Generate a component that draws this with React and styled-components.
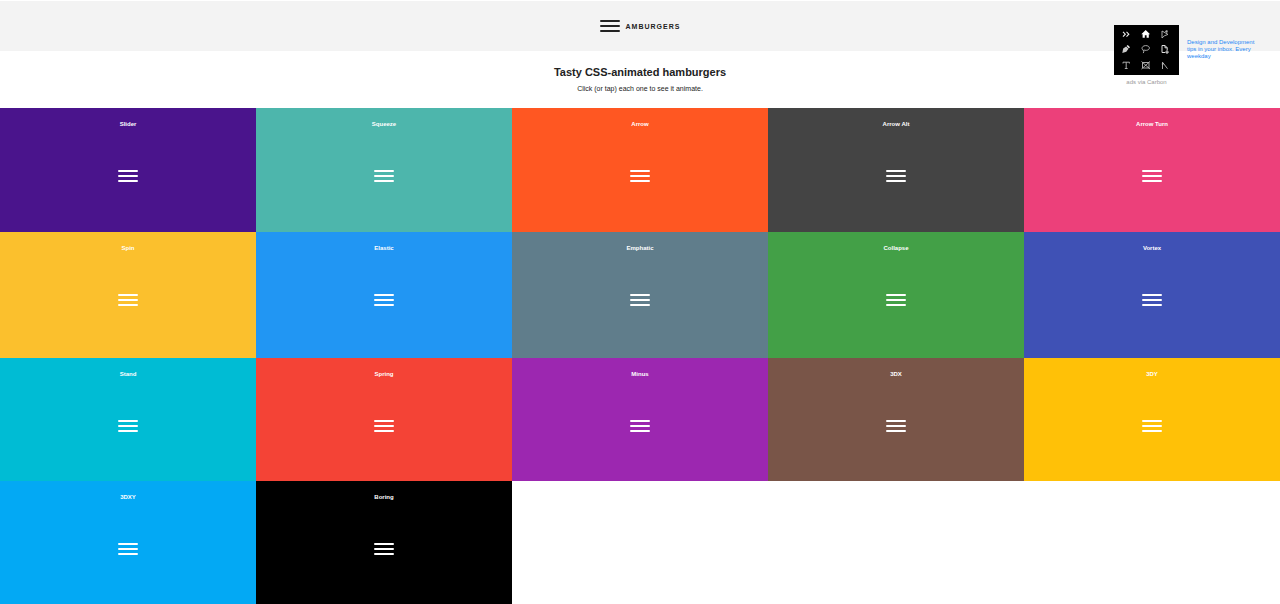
import React, { useState } from 'react'
import styled, { createGlobalStyle } from 'styled-components'

const burgers = [
    { name: 'Slider', color: '#4a148c' },
    { name: 'Squeeze', color: '#4db6ac' },
    { name: 'Arrow', color: '#ff5722' },
    { name: 'Arrow Alt', color: '#444444' },
    { name: 'Arrow Turn', color: '#ec407a' },
    { name: 'Spin', color: '#fbc02d' },
    { name: 'Elastic', color: '#2196f3' },
    { name: 'Emphatic', color: '#607d8b' },
    { name: 'Collapse', color: '#43a047' },
    { name: 'Vortex', color: '#3f51b5' },
    { name: 'Stand', color: '#00bcd4' },
    { name: 'Spring', color: '#f44336' },
    { name: 'Minus', color: '#9c27b0' },
    { name: '3DX', color: '#795548' },
    { name: '3DY', color: '#ffc107' },
    { name: '3DXY', color: '#03a9f4' },
    { name: 'Boring', color: '#000000' },
]

function Hamburger({ label, dark }) {
    const [active, setActive] = useState(false)
    return (
        <BurgerButton
            type="button"
            aria-label={label}
            aria-pressed={active}
            $dark={dark}
            $active={active}
            onClick={() => setActive(!active)}
        >
            <BurgerLine />
            <BurgerLine />
            <BurgerLine />
        </BurgerButton>
    )
}

function AdPicture() {
    return (
        <svg width="65" height="50" viewBox="0 0 65 50" fill="none" stroke="#bbb" strokeWidth="0.9" aria-hidden="true">
            <rect width="65" height="50" fill="#000" stroke="none" />
            {/* chevrons */}
            <path d="M9 6.8l2.3 2.4L9 11.6M12.5 6.8l2.3 2.4-2.3 2.4" stroke="#eee" strokeWidth="1.1" />
            {/* house */}
            <path d="M27.3 9.3L31.7 5l4.4 4.3h-1.3v3.5h-2.2v-2.6h-1.8v2.6h-2.2V9.3z" fill="#fff" stroke="none" />
            {/* anchor arrow */}
            <path d="M48 6v7l2.4-2.2L54 9.4 48 6M51 6.3h2.7M52.8 5v3" />
            {/* pen nib */}
            <path d="M8.3 28l.9-4.4 2.9-2.2 2.4 2.4-2.2 3z" fill="#ccc" stroke="none" />
            <path d="M12.6 21l1.1-1.1 2.3 2.3-1.1 1.1z" fill="#eee" stroke="none" />
            {/* lasso */}
            <path d="M29.5 25.3c-2.5-1-1.8-4.5 2-4.7 5-.2 5 4.4 1 4.7-1 .1-2 0-2.5-.3-.9 0-1 1.4 0 1.4l-.8 1.7" />
            {/* page with a plus */}
            <path d="M51 27.5h-3v-7h3l2.2 2.2v2.5M51 20.5v2.3h2.2M53 25.2v3.8M51.1 27.1h3.8" stroke="#ddd" strokeWidth="1" />
            {/* type tool */}
            <path d="M9 38.5v-1.3h6.4v1.3M12.2 37.2v6.3M10.8 43.5h2.8" />
            {/* crossed frame */}
            <path d="M28.5 37.5h6.5v5.5h-6.5zM27.5 36.5l8.5 7.5M36 36.5l-8.5 7.5" />
            {/* angle */}
            <path d="M48.5 44v-6.8l5 6.5M47.8 39h1.8" />
        </svg>
    )
}

export default function App() {
    return (
        <>
            <GlobalStyle />
            <Header>
                <Hamburger label="Menu" dark />
                <Wordmark>AMBURGERS</Wordmark>
            </Header>
            <Ad>
                <AdImage>
                    <AdLink href="#ad" aria-label="Sponsor">
                        <AdPicture />
                    </AdLink>
                    <AdVia href="#carbon">ads via Carbon</AdVia>
                </AdImage>
                <AdText href="#ad">Design and Development tips in your inbox. Every weekday</AdText>
            </Ad>
            <main>
                <Intro>
                    <Title>Tasty CSS-animated hamburgers</Title>
                    <Subtitle>Click (or tap) each one to see it animate.</Subtitle>
                </Intro>
                <Grid>
                    {burgers.map(burger => (
                        <Tile key={burger.name} $color={burger.color}>
                            <TileName>{burger.name}</TileName>
                            <Hamburger label={burger.name} />
                        </Tile>
                    ))}
                </Grid>
            </main>
        </>
    )
}

const GlobalStyle = createGlobalStyle`
    * {
        box-sizing: border-box;
    }
    body {
        margin: 0;
        background: #fff;
        color: #222;
        font-family: Arial, "Liberation Sans", sans-serif;
    }
    a {
        text-decoration: none;
    }
`

const Header = styled.header`
    display: flex;
    align-items: center;
    justify-content: center;
    gap: 6px;
    height: 51px;
    border-top: 1px solid #fff;
    background: #f3f3f3;
`

const Wordmark = styled.span`
    padding-top: 2px;
    font-size: 7px;
    font-weight: bold;
    line-height: 8px;
    letter-spacing: 1px;
`

const BurgerButton = styled.button`
    display: flex;
    flex-direction: column;
    gap: 3px;
    width: 20px;
    padding: 0;
    border: 0;
    background: none;
    color: ${props => (props.$dark ? '#222' : '#fff')};
    cursor: pointer;
    opacity: ${props => (props.$active ? 0.7 : 1)};
`

const BurgerLine = styled.span`
    height: 2px;
    border-radius: 1px;
    background: currentColor;
`

const Ad = styled.aside`
    position: absolute;
    top: 25px;
    right: 20px;
    display: flex;
    gap: 8px;
`

const AdImage = styled.div`
    display: flex;
    flex-direction: column;
    align-items: center;
    gap: 4px;
`

const AdLink = styled.a`
    display: block;

    svg {
        display: block;
    }
`

const AdVia = styled.a`
    color: #999;
    font-size: 6px;
    line-height: 7px;
`

const AdText = styled.a`
    width: 73px;
    padding-top: 14px;
    color: #1e88f5;
    font-size: 6px;
    line-height: 7px;
`

const Intro = styled.div`
    padding: 14px 0;
    text-align: center;
`

const Title = styled.h1`
    margin: 0 0 4px;
    font-size: 11px;
    line-height: 14px;
`

const Subtitle = styled.p`
    margin: 0;
    font-size: 7px;
    line-height: 11px;
`

const Grid = styled.div`
    display: grid;
    grid-template-columns: repeat(5, 1fr);
    grid-template-rows: 124px 126px 123px 123px;
`

const Tile = styled.section`
    display: flex;
    flex-direction: column;
    align-items: center;
    gap: 41px;
    padding-top: 12px;
    background: ${props => props.$color};
    color: #fff;
`

const TileName = styled.h2`
    margin: 0;
    font-size: 6px;
    line-height: 9px;
`
